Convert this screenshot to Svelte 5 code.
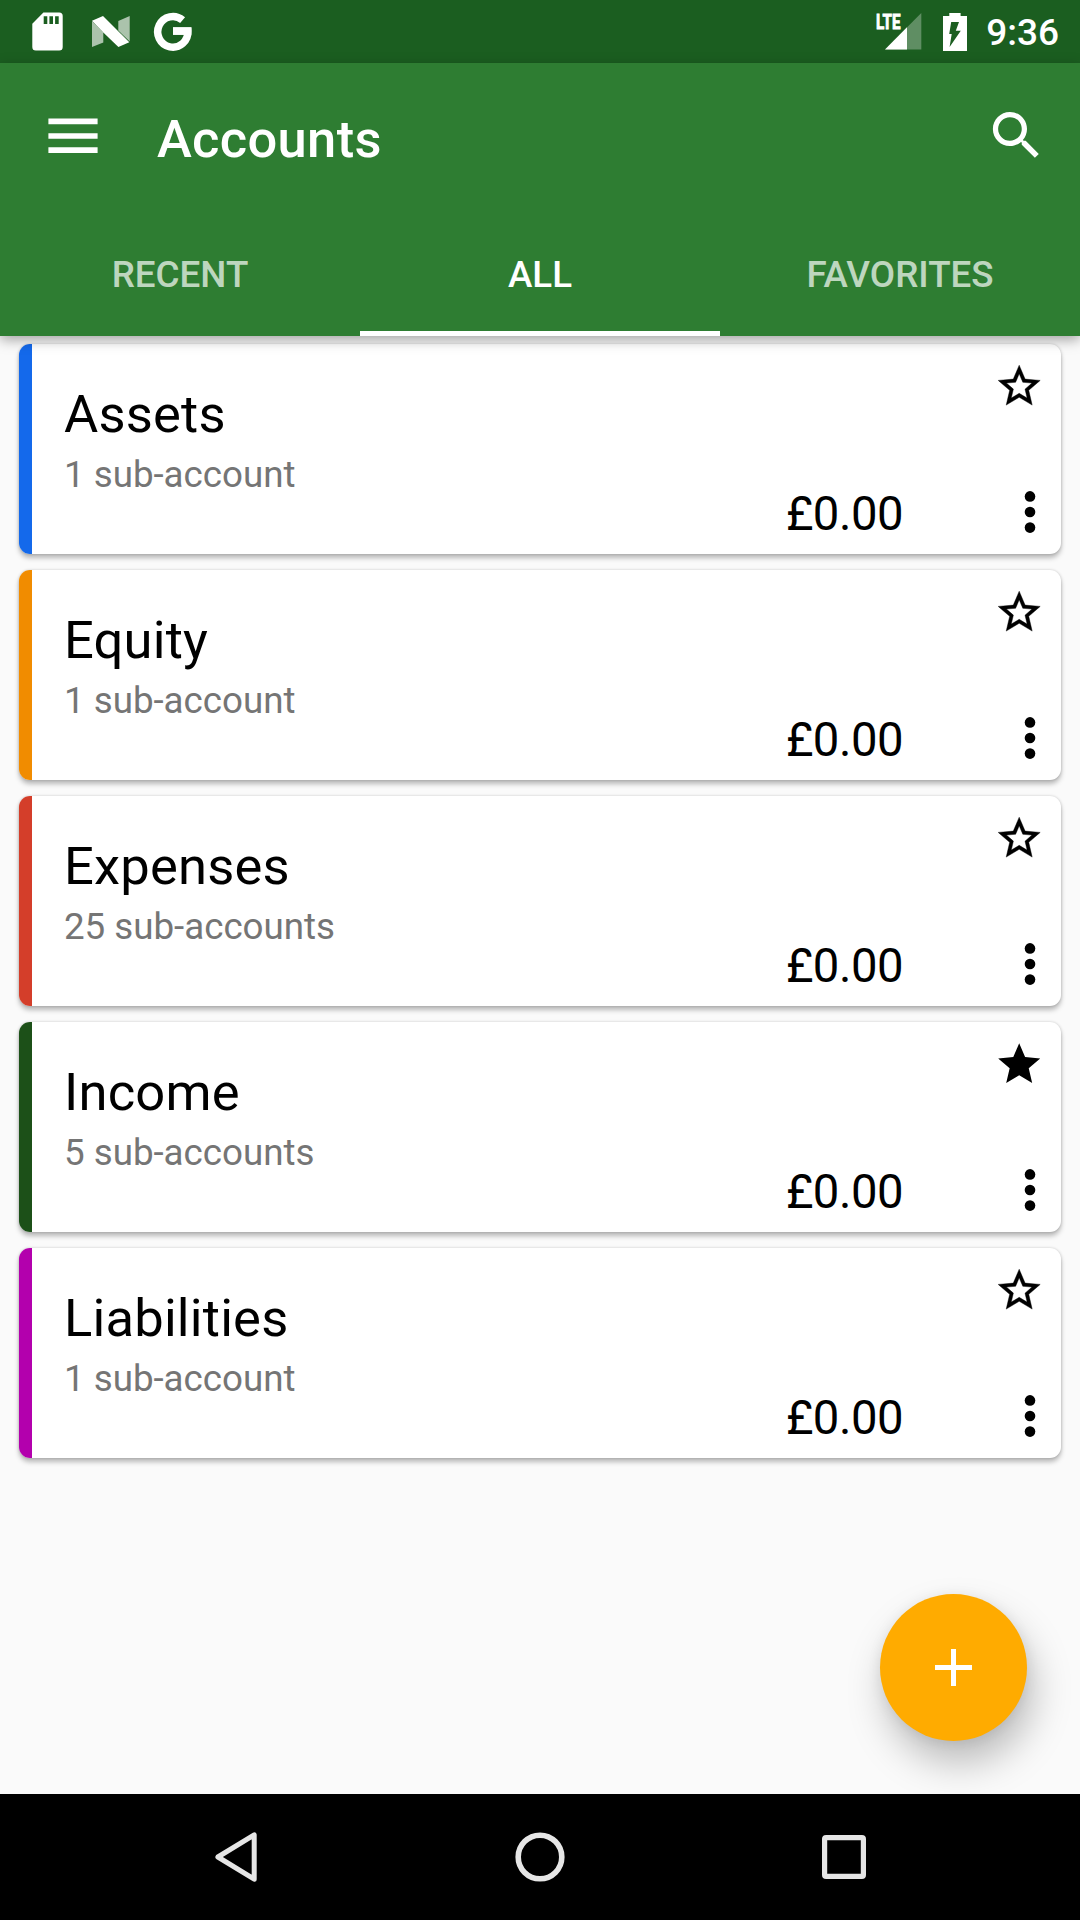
<script>
  const accounts = [
    { name: 'Assets', detail: '1 sub-account', balance: '£0.00', color: '#1469eb', favorite: false },
    { name: 'Equity', detail: '1 sub-account', balance: '£0.00', color: '#f18c00', favorite: false },
    { name: 'Expenses', detail: '25 sub-accounts', balance: '£0.00', color: '#d43e2a', favorite: false },
    { name: 'Income', detail: '5 sub-accounts', balance: '£0.00', color: '#1c5018', favorite: true },
    { name: 'Liabilities', detail: '1 sub-account', balance: '£0.00', color: '#b300ad', favorite: false },
  ];
  const tabs = ['RECENT', 'ALL', 'FAVORITES'];
  let active = $state('ALL');
</script>

<div class="screen">
  <div class="status">
    <div class="notifications">
      <svg width="31" height="39" viewBox="0 0 31 39">
        <path fill="#fff" fill-rule="evenodd" d="M11.4 .5H27.2Q30.7 .5 30.7 4V35Q30.7 38.5 27.2 38.5H3.8Q.3 38.5 .3 35V11.8ZM11.7 4.3V12H15.3V4.3ZM17.4 4.3V12H21V4.3ZM23.1 4.3V12H26.7V4.3Z" />
      </svg>
      <svg width="38" height="32" viewBox="0 0 38 32">
        <path fill="#fff" fill-opacity=".63" d="M0 5L11.3 16.5V26.5L0 31ZM26.3 5L37.7 0V25.5L26.3 14.5Z" />
        <path fill="#fff" d="M0 4.8L11 .1L37.3 26.2L26.4 31L11.3 16.5Z" />
      </svg>
      <svg width="38" height="39" viewBox="0 0 38 39">
        <path fill="none" stroke="#fff" stroke-width="7.5" d="M28.6 8.2A15.1 15.3 0 1 0 33.9 19.1H19" />
        <path fill="#fff" d="M19 15.4H37.3V22.8H19Z" />
      </svg>
    </div>
    <div class="system">
      <svg width="46" height="37" viewBox="0 0 46 37">
        <path fill="#fff" fill-opacity=".3" d="M45.3 0V36.5H9Z" />
        <path fill="#fff" d="M31 14.3V36.5H9Z" />
        <path fill="#1b5e20" d="M0 0H25V16.8H0Z" />
        <text x="0" y="16" textLength="24.5" lengthAdjust="spacingAndGlyphs">LTE</text>
      </svg>
      <svg class="battery" width="24" height="38" viewBox="0 0 24 38">
        <path fill="#fff" fill-rule="evenodd" d="M6.3 0H17.6V3H24V38H0V3H6.3ZM8.2 9H16L12.8 17.7H17.8L6.6 34L8.7 20.9H6.2Z" />
      </svg>
      <span class="clock">9:36</span>
    </div>
  </div>

  <header>
    <div class="toolbar">
      <svg class="menu" width="50" height="36" viewBox="0 0 50 36">
        <path fill="#fff" d="M.4 .4H49.6V6.2H.4ZM.4 15.2H49.6V20.7H.4ZM.4 29.3H49.6V35H.4Z" />
      </svg>
      <h1>Accounts</h1>
      <svg class="search" width="63" height="63" viewBox="0 0 24 24">
        <path fill="#fff" d="M15.5 14h-.79l-.28-.27C15.41 12.59 16 11.11 16 9.5 16 5.91 13.09 3 9.5 3S3 5.91 3 9.5 5.91 16 9.5 16c1.61 0 3.09-.59 4.23-1.57l.27.28v.79l5 4.99L20.49 19l-4.99-5zm-6 0C7.01 14 5 11.99 5 9.5S7.01 5 9.5 5 14 7.01 14 9.5 11.99 14 9.5 14z" />
      </svg>
    </div>
    <nav class="tabs">
      {#each tabs as tab}
        <button class:active={active === tab} onclick={() => (active = tab)}>{tab}</button>
      {/each}
    </nav>
  </header>

  <main>
    {#each accounts as account}
      <article>
        <div class="strip" style:background={account.color}></div>
        <div class="info">
          <h2>{account.name}</h2>
          <p>{account.detail}</p>
        </div>
        <div class="balance">{account.balance}</div>
        <div class="actions">
          <svg class="star" width="50.4" height="50.4" viewBox="0 0 24 24">
            {#if account.favorite}
              <path d="M12 17.27L18.18 21l-1.64-7.03L22 9.24l-7.19-.61L12 2 9.19 8.63 2 9.24l5.46 4.73L5.82 21z" />
            {:else}
              <path stroke="#000" stroke-width=".2" d="M22 9.24l-7.19-.62L12 2 9.19 8.63 2 9.24l5.46 4.73L5.82 21 12 17.27 18.18 21l-1.63-7.03L22 9.24zM12 15.4l-3.76 2.27 1-4.28-3.32-2.88 4.38-.38L12 6.1l1.71 4.04 4.38.38-3.32 2.88 1 4.28L12 15.4z" />
            {/if}
          </svg>
          <svg class="more" width="12" height="42" viewBox="0 0 12 42">
            <circle cx="6" cy="5.4" r="5.3" /><circle cx="6" cy="21" r="5.3" /><circle cx="6" cy="36.6" r="5.3" />
          </svg>
        </div>
      </article>
    {/each}
    <button class="fab" aria-label="Add account">
      <svg width="37" height="37" viewBox="0 0 37 37"><path fill="#fff" d="M16 0H21V16H37V21H21V37H16V21H0V16H16Z" /></svg>
    </button>
  </main>

  <footer>
    <svg width="42" height="50" viewBox="0 0 42 50">
      <path fill="none" stroke="#e6e6e6" stroke-width="5" stroke-linejoin="round" d="M39.2 2.8V47.2L2.9 25Z" />
    </svg>
    <svg width="50" height="50" viewBox="0 0 50 50">
      <circle cx="25" cy="25" r="21.8" fill="none" stroke="#e6e6e6" stroke-width="5.6" />
    </svg>
    <svg width="44" height="44" viewBox="0 0 44 44">
      <rect x="2.6" y="2.6" width="38.8" height="38.8" rx="1.5" fill="none" stroke="#e6e6e6" stroke-width="5.2" />
    </svg>
  </footer>
</div>

<style>
  :global(body) { background: #fafafa; }
  .screen {
    width: 1080px;
    height: 1920px;
    display: flex;
    flex-direction: column;
    overflow: hidden;
    background: #fafafa;
    font-family: Roboto, sans-serif;
    color: #000;
  }
  svg { display: block; flex: none; overflow: visible; }
  button { border: 0; margin: 0; padding: 0; font: inherit; color: inherit; background: none; }
  h1, h2, p { margin: 0; font-weight: 400; }

  .status {
    height: 63px;
    flex: none;
    display: flex;
    justify-content: space-between;
    padding: 0 21px 0 32px;
    background: #1b5e20;
    color: #fff;
  }
  .notifications, .system { display: flex; align-items: center; }
  .notifications { gap: 29px; }
  .notifications svg:last-child { margin-left: -5px; }
  .system svg text { font: 700 21px Roboto, sans-serif; fill: #fff; stroke: #fff; stroke-width: .9px; }
  .battery { margin: 0 19px 0 21px; }
  .clock { font-size: 37px; font-weight: 500; line-height: 44px; padding-top: 3px; }

  header {
    position: relative;
    z-index: 1;
    height: 273px;
    flex: none;
    background: #2e7d32;
    color: #fff;
    box-shadow: 0 4px 12px rgba(0, 0, 0, .34);
  }
  .toolbar { height: 147px; display: flex; align-items: center; padding: 0 32px 2px 48px; box-sizing: border-box; }
  .toolbar h1 { flex: 1; margin-left: 59px; font-size: 52.5px; font-weight: 500; line-height: 62px; padding-top: 7px; letter-spacing: .3px; }
  .tabs { height: 126px; display: grid; grid-template-columns: repeat(3, 1fr); }
  .tabs button {
    font-size: 36.75px;
    font-weight: 500;
    line-height: 44px;
    color: rgba(255, 255, 255, .7);
    border-bottom: 5px solid transparent;
    padding-top: 9px;
  }
  .tabs button.active { color: #fff; border-color: #fff; }

  main {
    flex: 1;
    display: flex;
    flex-direction: column;
    gap: 16px;
    padding: 8px 19px 0;
  }
  article {
    height: 210px;
    flex: none;
    display: flex;
    border-radius: 11px;
    overflow: hidden;
    background: #fff;
    box-shadow: 0 4px 5px rgba(0, 0, 0, .26), 0 0 3px rgba(0, 0, 0, .18);
  }
  .strip { width: 13px; }
  .info { flex: 1; padding: 39px 0 0 32px; }
  h2 { font-size: 52.5px; line-height: 62px; letter-spacing: .2px; }
  p { margin-top: 8px; font-size: 36.75px; line-height: 44px; letter-spacing: -.03px; color: #757575; }
  .balance { align-self: flex-end; font-size: 47.25px; line-height: 56px; letter-spacing: -.5px; padding-bottom: 12px; }
  .actions {
    width: 158px;
    display: flex;
    flex-direction: column;
    align-items: flex-end;
    justify-content: space-between;
    padding: 17px 0 21px;
    box-sizing: border-box;
  }
  .star { margin-right: 17px; }
  .more { margin-right: 25px; }

  .fab {
    width: 147px;
    height: 147px;
    margin: auto 34px 53px auto;
    display: grid;
    place-items: center;
    flex: none;
    border-radius: 50%;
    background: #ffab00;
    box-shadow: 6px 22px 38px rgba(0, 0, 0, .25), 0 2px 14px rgba(0, 0, 0, .08);
  }

  footer {
    position: relative;
    height: 126px;
    flex: none;
    display: flex;
    align-items: center;
    justify-content: space-between;
    padding: 0 214px 0 215px;
    box-sizing: border-box;
    background: #000;
  }
</style>
